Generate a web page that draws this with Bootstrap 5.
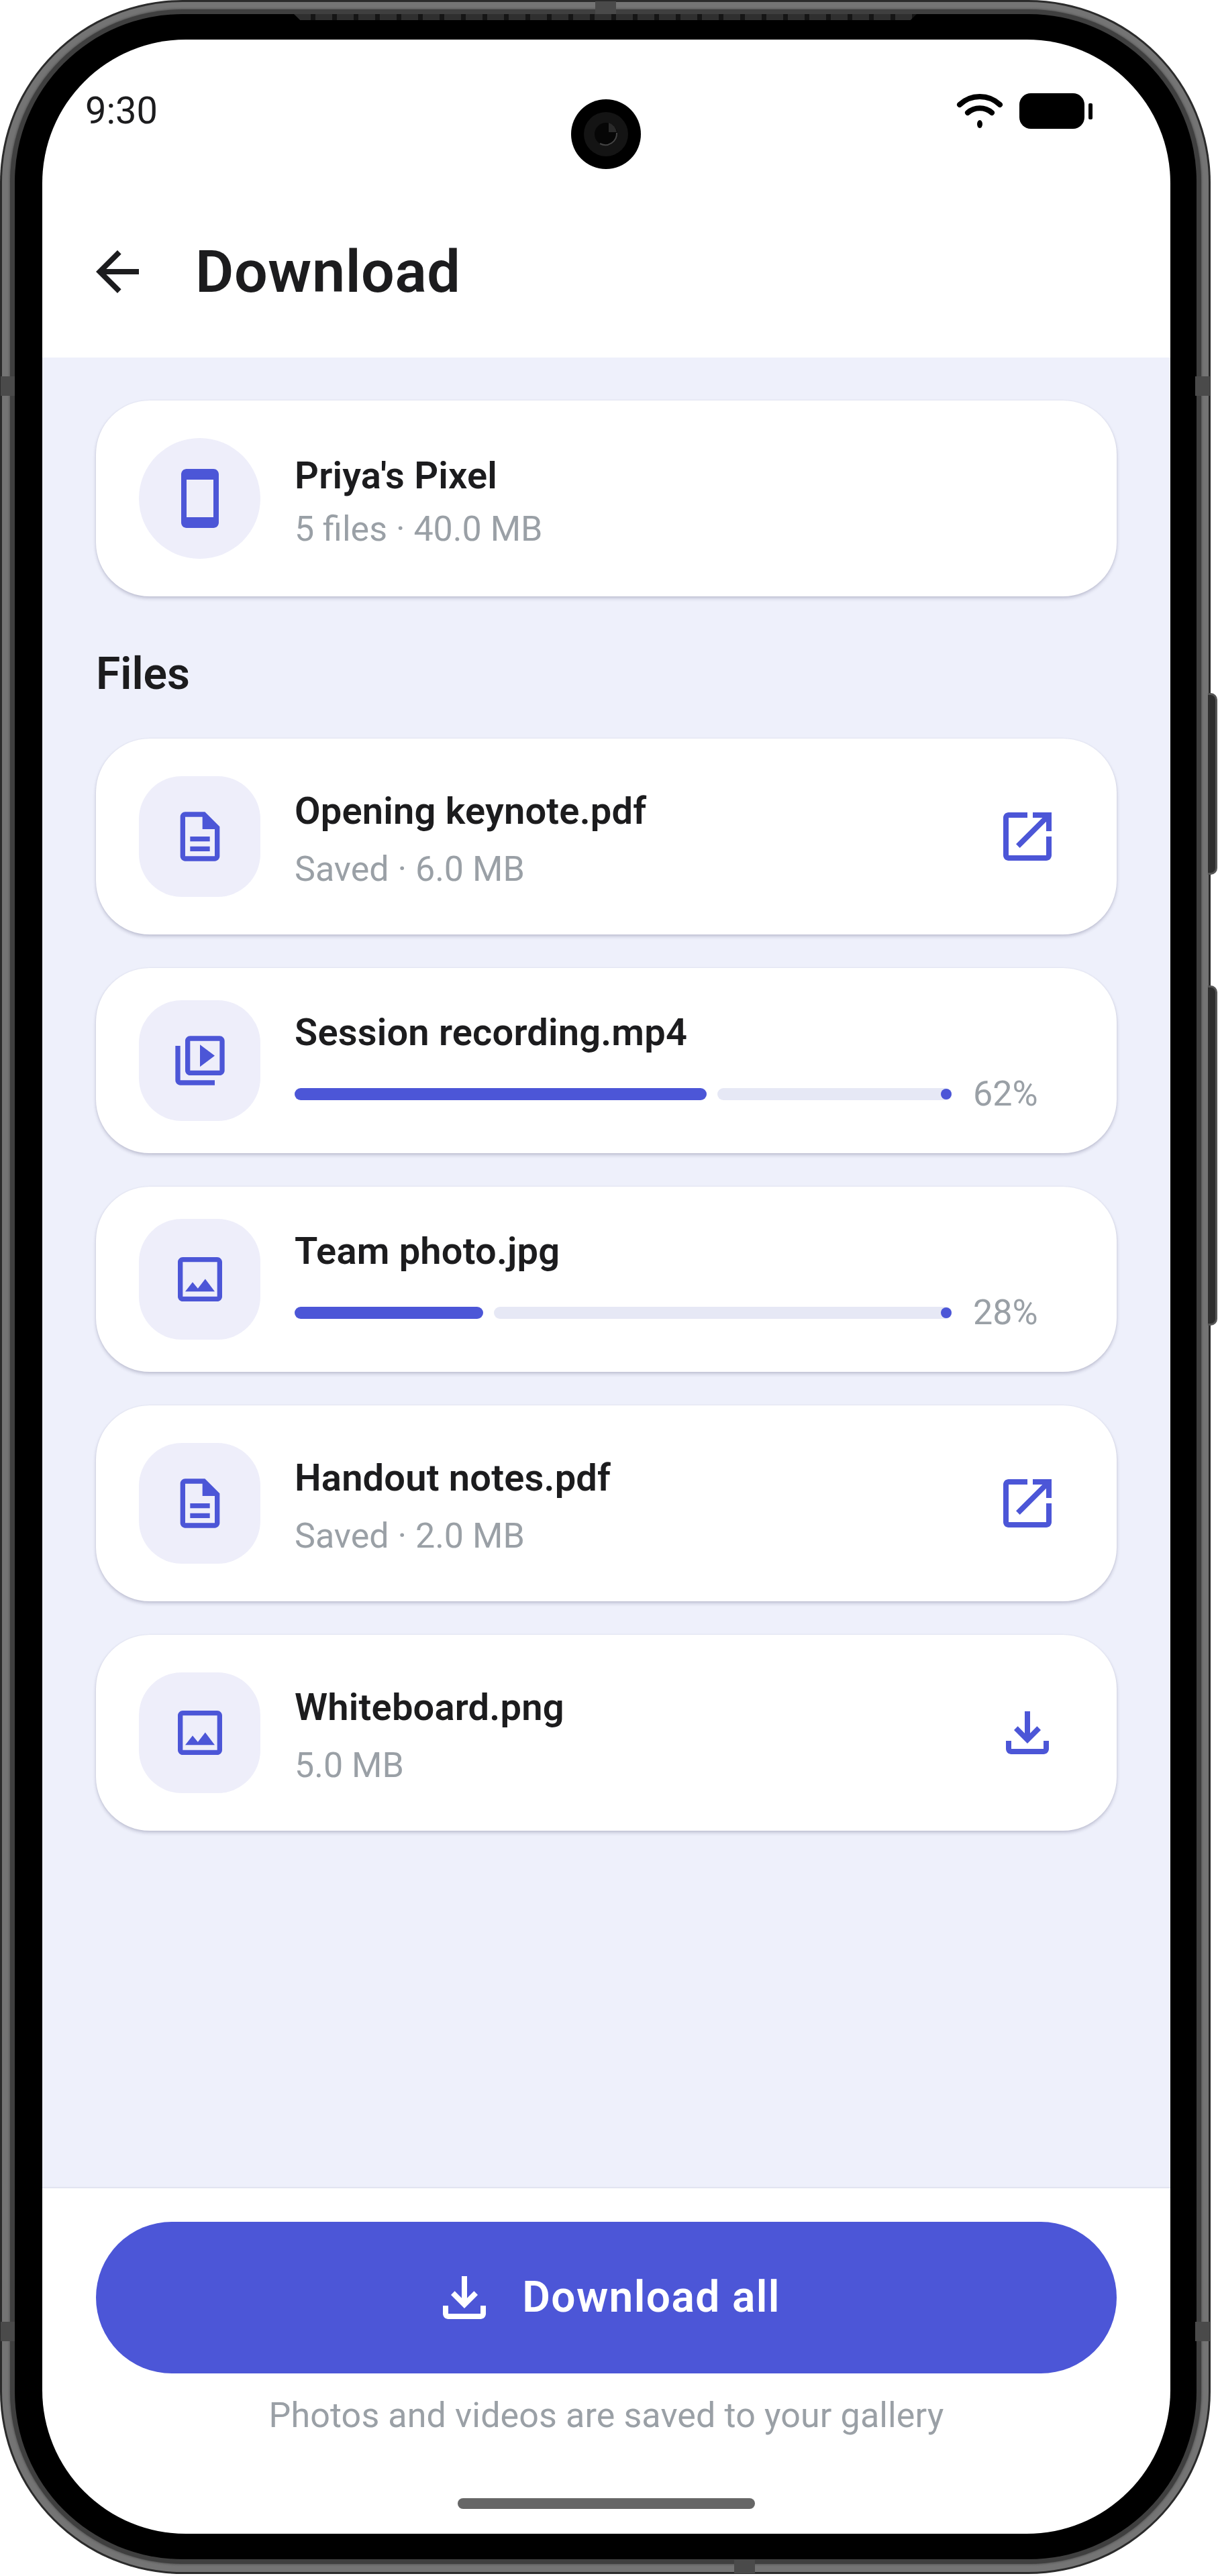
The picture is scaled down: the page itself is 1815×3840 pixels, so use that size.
<!DOCTYPE html>
<html lang="en">
<head>
<meta charset="UTF-8" />
<meta name="viewport" content="width=device-width, initial-scale=1" />
<title>Download</title>
<link href="https://cdn.jsdelivr.net/npm/bootstrap@5.3.0/dist/css/bootstrap.min.css" rel="stylesheet" />
<style>
    body { margin: 0; background: #fff; width: 1815px; height: 3840px; overflow: hidden; font-family: Roboto, "Liberation Sans", sans-serif; color: #1c1c1e; }

    /* device frame */
    .phone-shell { position: relative; width: 1804px; height: 3837px; padding: 3px; background: #2b2b2b; border-radius: 272px; }
    .phone-metal { height: 100%; padding: 18px 18px 19px 19px; background: #747474; border-radius: 269px; }
    .phone-bezel { height: 100%; padding: 38px 39px 38px 41px; background: #000; border-radius: 250px; box-shadow: 0 0 0 7px #3f3f3f, 0 0 3px 8px #555; }
    .phone-key { position: absolute; left: 1800px; width: 14px; background: #2e2e2e; border: 3px solid #555; border-left: 0; border-radius: 0 10px 10px 0; }
    .key-power { top: 1033px; height: 271px; }
    .key-volume { top: 1469px; height: 507px; }
    .phone-band { position: absolute; background: #4a4a4a; }
    .band-top { left: 887px; top: 2px; width: 31px; height: 19px; }
    .band-bottom { left: 1094px; top: 3816px; width: 31px; height: 20px; }
    .band-left { left: 1px; width: 21px; height: 29px; }
    .band-right { left: 1781px; width: 22px; height: 29px; }
    .band-upper { top: 561px; }
    .band-lower { top: 3461px; }
    .phone-grille { position: absolute; left: 438px; top: 21px; width: 928px; height: 9px; clip-path: polygon(0 0, 100% 0, 99% 100%, 1% 100%); background: repeating-linear-gradient(90deg, #2f2f2f 0 25px, #151515 25px 32px); }
    .phone-camera { position: absolute; left: 851px; top: 148px; width: 104px; height: 104px; background: #000; border-radius: 50%; }
    .phone-camera svg { display: block; }

    .screen { height: 100%; background: #fff; border-radius: 214px; overflow: hidden; }

    /* top of screen */
    .status-row { height: 146px; padding: 78px 115px 0 64px; }
    .status-time { font-size: 56px; line-height: 56px; }
    .status-icons { margin-top: 2px; }
    .app-row { height: 328px; padding: 72px 0 0 64px; }
    .app-title { font-size: 88px; font-weight: 600; line-height: 1; letter-spacing: .6px; margin: 0 0 0 68px; color: #1c1c1e; }

    /* list */
    .list-area { background: #eef0fb; padding: 64px 80px 0; }
    .row-card { background: #fff; border: 0; border-radius: 80px; padding: 56px 64px; margin-bottom: 50px; box-shadow: 0 3px 5px rgba(50, 50, 90, .24), 0 0 3px rgba(50, 50, 90, .06); }
    .row-card-bar { padding: 48px 64px; }
    .tile { width: 181px; height: 180px; flex: none; background: #eeeefa; border-radius: 64px; color: #4c56d7; }
    .tile-round { border-radius: 50%; }
    .row-text { margin: 7px 0 0 51px; }
    .row-card-bar .row-text { margin-top: 3px; }
    .row-name { font-size: 56px; font-weight: 600; line-height: 68px; letter-spacing: .2px; color: #1c1c1e; }
    .row-sub { font-size: 52px; line-height: 60px; margin-top: 23px; color: #9aa0a6; }
    .row-sub-tight { margin-top: 16px; }
    .files-head { font-size: 66px; font-weight: 600; line-height: 80px; margin: 76px 0 56px; color: #1c1c1e; }
    .row-action { width: 96px; height: 96px; flex: none; margin-right: 21px; color: #4c56d7; }

    .bar-line { height: 60px; margin-top: 28px; }
    .bar-done { height: 18px; background: #4c56d7; border-radius: 9px; }
    .bar-rest { height: 18px; margin-left: 16px; background: #e6e8f5; border-radius: 9px; }
    .bar-rest::after { content: ""; position: absolute; right: 0; top: 1px; width: 16px; height: 16px; background: #4c56d7; border-radius: 50%; }
    .bar-pct { width: 150px; margin-left: 32px; font-size: 52px; line-height: 60px; color: #9aa0a6; }

    /* bottom */
    .foot-area { height: 515px; padding: 50px 80px 0; box-shadow: 0 -1px 2px rgba(50, 50, 90, .12); }
    .go-btn { height: 226px; background: #4c56d7; color: #fff; border: 0; border-radius: 113px; font-size: 64px; font-weight: 600; letter-spacing: 1.4px; gap: 38px; }
    .go-btn:hover { background: #4c56d7; color: #fff; }
    .foot-note { font-size: 52px; line-height: 60px; letter-spacing: .12px; margin-top: 33px; color: #9aa0a6; }
    .home-pill { width: 443px; height: 16px; margin: 93px auto 0; background: #666; border-radius: 8px; }
</style>
</head>
<body>
<svg width="0" height="0" class="position-absolute">
    <symbol id="ic-doc" viewBox="0 0 24 24"><path fill="currentColor" d="M8 16h8v2H8zm0-4h8v2H8zm6-10H6c-1.1 0-2 .9-2 2v16c0 1.1.89 2 1.99 2H18c1.1 0 2-.9 2-2V8l-6-6zm4 18H6V4h7v5h5v11z"/></symbol>
    <symbol id="ic-video" viewBox="0 0 24 24"><path fill="currentColor" d="M4 6H2v14c0 1.1.9 2 2 2h14v-2H4V6zm16-4H8c-1.1 0-2 .9-2 2v12c0 1.1.9 2 2 2h12c1.1 0 2-.9 2-2V4c0-1.1-.9-2-2-2zm0 14H8V4h12v12zM12 5.5v9l6-4.5z"/></symbol>
    <symbol id="ic-image" viewBox="0 0 24 24"><path fill="currentColor" d="M19 5v14H5V5h14m0-2H5c-1.1 0-2 .9-2 2v14c0 1.1.9 2 2 2h14c1.1 0 2-.9 2-2V5c0-1.1-.9-2-2-2zm-4.86 8.86l-3 3.87L9 13.14 6 17h12l-3.86-5.14z"/></symbol>
    <symbol id="ic-open" viewBox="0 0 24 24"><path fill="currentColor" d="M19 19H5V5h7V3H5c-1.11 0-2 .9-2 2v14c0 1.1.89 2 2 2h14c1.1 0 2-.9 2-2v-7h-2v7zM14 3v2h3.59l-9.83 9.83 1.41 1.41L19 6.41V10h2V3h-7z"/></symbol>
    <symbol id="ic-save" viewBox="0 0 24 24"><path fill="currentColor" d="M18 15v3H6v-3H4v3c0 1.1.9 2 2 2h12c1.1 0 2-.9 2-2v-3h-2zm-1-4l-1.41-1.41L13 12.17V4h-2v8.17L8.41 9.59 7 11l5 5 5-5z"/></symbol>
    <symbol id="ic-phone" viewBox="0 0 24 24"><path fill="currentColor" d="M17 1.01L7 1c-1.1 0-2 .9-2 2v18c0 1.1.9 2 2 2h10c1.1 0 2-.9 2-2V3c0-1.1-.9-1.99-2-1.99zM17 19H7V5h10v14z"/></symbol>
</svg>

<div class="phone-shell">
    <div class="phone-metal">
        <div class="phone-bezel">
            <div class="screen d-flex flex-column">
                <div class="status-row d-flex justify-content-between align-items-start">
                    <div class="status-time">9:30</div>
                    <div class="status-icons d-flex align-items-start">
                        <svg width="70" height="54" viewBox="0 0 70 54" fill="none" stroke="#000" stroke-width="8" stroke-linecap="round">
                            <path d="M5 17C22 1 48 1 65 17"/>
                            <path d="M17 29C27 20 43 20 53 29"/>
                            <ellipse cx="35" cy="46" rx="4" ry="6" fill="#000" stroke="none"/>
                        </svg>
                        <svg class="ms-4" width="110" height="54" viewBox="0 0 110 54">
                            <rect x="0" y="0" width="97" height="53" rx="17" fill="#000"/>
                            <rect x="103" y="15" width="6" height="24" rx="2" fill="#000"/>
                        </svg>
                    </div>
                </div>
                <div class="app-row d-flex align-items-center">
                    <svg width="96" height="96" viewBox="0 0 24 24"><path fill="#1c1c1e" d="M20 11H7.83l5.59-5.59L12 4l-8 8 8 8 1.41-1.41L7.83 13H20v-2z"/></svg>
                    <h1 class="app-title">Download</h1>
                </div>

                <div class="list-area flex-grow-1">
                    <div class="card row-card flex-row align-items-center">
                        <div class="tile tile-round d-flex align-items-center justify-content-center"><svg width="96" height="96"><use href="#ic-phone"/></svg></div>
                        <div class="row-text">
                            <div class="row-name">Priya's Pixel</div>
                            <div class="row-sub row-sub-tight">5 files · 40.0 MB</div>
                        </div>
                    </div>

                    <div class="files-head">Files</div>

                    <div class="d-flex flex-column">
                        <div class="card row-card flex-row align-items-center">
                            <div class="tile d-flex align-items-center justify-content-center"><svg width="88" height="88"><use href="#ic-doc"/></svg></div>
                            <div class="row-text flex-grow-1">
                                <div class="row-name">Opening keynote.pdf</div>
                                <div class="row-sub">Saved · 6.0 MB</div>
                            </div>
                            <div class="row-action"><svg width="96" height="96"><use href="#ic-open"/></svg></div>
                        </div>
                        <div class="card row-card row-card-bar flex-row align-items-center">
                            <div class="tile d-flex align-items-center justify-content-center"><svg width="88" height="88"><use href="#ic-video"/></svg></div>
                            <div class="row-text flex-grow-1">
                                <div class="row-name">Session recording.mp4</div>
                                <div class="bar-line d-flex align-items-center">
                                    <div class="bar-done" style="width: 614px"></div>
                                    <div class="bar-rest flex-grow-1 position-relative"></div>
                                    <div class="bar-pct">62%</div>
                                </div>
                            </div>
                        </div>
                        <div class="card row-card row-card-bar flex-row align-items-center">
                            <div class="tile d-flex align-items-center justify-content-center"><svg width="88" height="88"><use href="#ic-image"/></svg></div>
                            <div class="row-text flex-grow-1">
                                <div class="row-name">Team photo.jpg</div>
                                <div class="bar-line d-flex align-items-center">
                                    <div class="bar-done" style="width: 281px"></div>
                                    <div class="bar-rest flex-grow-1 position-relative"></div>
                                    <div class="bar-pct">28%</div>
                                </div>
                            </div>
                        </div>
                        <div class="card row-card flex-row align-items-center">
                            <div class="tile d-flex align-items-center justify-content-center"><svg width="88" height="88"><use href="#ic-doc"/></svg></div>
                            <div class="row-text flex-grow-1">
                                <div class="row-name">Handout notes.pdf</div>
                                <div class="row-sub">Saved · 2.0 MB</div>
                            </div>
                            <div class="row-action"><svg width="96" height="96"><use href="#ic-open"/></svg></div>
                        </div>
                        <div class="card row-card flex-row align-items-center">
                            <div class="tile d-flex align-items-center justify-content-center"><svg width="88" height="88"><use href="#ic-image"/></svg></div>
                            <div class="row-text flex-grow-1">
                                <div class="row-name">Whiteboard.png</div>
                                <div class="row-sub">5.0 MB</div>
                            </div>
                            <div class="row-action"><svg width="96" height="96"><use href="#ic-save"/></svg></div>
                        </div>
                    </div>
                </div>

                <div class="foot-area">
                    <button class="btn go-btn w-100 d-flex align-items-center justify-content-center" type="button">
                        <svg width="96" height="96"><use href="#ic-save"/></svg>
                        <span>Download all</span>
                    </button>
                    <div class="foot-note text-center">Photos and videos are saved to your gallery</div>
                    <div class="home-pill"></div>
                </div>
            </div>
        </div>
    </div>

    <div class="phone-grille"></div>
    <div class="phone-camera">
        <svg width="104" height="104" viewBox="0 0 104 104">
            <circle cx="52" cy="52" r="33" fill="#141414"/>
            <circle cx="52" cy="52" r="17" fill="#060606"/>
            <path d="M68 50a17 17 0 0 1-25 16" fill="none" stroke="#444" stroke-width="2"/>
            <path d="M56 35a17 17 0 0 1 12 14l-12 0z" fill="#2a2a2a"/>
        </svg>
    </div>
    <span class="phone-band band-top"></span>
    <span class="phone-band band-bottom"></span>
    <span class="phone-band band-left band-upper"></span>
    <span class="phone-band band-right band-upper"></span>
    <span class="phone-band band-left band-lower"></span>
    <span class="phone-band band-right band-lower"></span>
    <span class="phone-key key-power"></span>
    <span class="phone-key key-volume"></span>
</div>
<script src="https://cdn.jsdelivr.net/npm/bootstrap@5.3.0/dist/js/bootstrap.bundle.min.js"></script>
</body>
</html>
